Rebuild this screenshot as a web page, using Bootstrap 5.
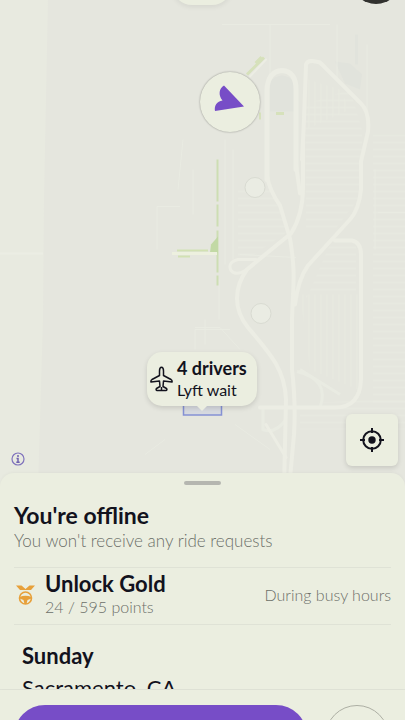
<!DOCTYPE html>
<html lang="en">
<head>
<meta charset="utf-8">
<meta name="viewport" content="width=device-width, initial-scale=1">
<title>Driver map</title>
<link rel="stylesheet" href="https://cdn.jsdelivr.net/npm/bootstrap@5.3.0/dist/css/bootstrap.min.css">
<style>
  :root { --surface: #ebeee0; --ink: #12121d; --muted: #6c6f69; --line: #dfe2d6; --brand: #774dc7; }
  body { font-family: Lato, "Open Sans", sans-serif; color: var(--ink); background: var(--surface); }
  .map-area { background: #e5e6de; margin-bottom: -16px; min-height: 0; }
  .map-art { inset: 0; }
  .map-pin { padding: 0; border: 0; background: var(--surface); color: var(--ink); }
  .pin-position { left: 200px; top: 72px; width: 60px; height: 60px; box-shadow: 0 0 2px #0006; }
  .top-pill { left: 172px; top: -35px; width: 60px; height: 40px; box-shadow: 0 2px 5px #0001; }
  .top-dark { right: 4px; top: -46px; width: 50px; height: 50px; background: #32322f; }
  .airport { left: 147px; top: 352px; width: 110px; height: 54px; border-radius: 15px; padding-left: 3px; gap: 4px; box-shadow: 0 2px 5px #0002; }
  .airport::after { content: ""; position: absolute; left: 50px; top: 100%; border: 5px solid transparent; border-top-color: var(--surface); border-bottom: 0; }
  .locate { right: 7px; bottom: 23px; width: 52px; height: 52px; border-radius: 6px; box-shadow: 0 2px 5px #0002; }
  .info { left: 11px; bottom: 23px; width: 14px; height: 14px; background: none; }
  .sheet { height: 216px; border-radius: 14px 14px 0 0; background: var(--surface); box-shadow: 0 -1px 3px #00000008; }
  .handle { width: 37px; height: 4px; background: #b5b6b0; margin-top: 8px; }
  .status { margin: 16px 14px 0; padding-bottom: 14px; border-bottom: 1px solid var(--line); }
  .title { font-size: 23px; line-height: 28px; font-weight: 700; margin: 0; }
  .item-title { font-size: 22px; line-height: 24px; font-weight: 700; margin: 0; }
  .sub { font-size: 17px; line-height: 24px; font-weight: 300; color: var(--muted); margin: 0; }
  .note { font-size: 16px; line-height: 22px; font-weight: 300; color: var(--muted); margin: 0; }
  .pin-title { font-size: 18px; line-height: 21px; font-weight: 700; }
  .pin-text { font-size: 16px; line-height: 22px; }
  .reward { margin: 0 14px; height: 57px; gap: 9px; padding-bottom: 2px; border-bottom: 1px solid var(--line); color: inherit; }
  .day { padding: 19px 22px 0; }
  .place { font-size: 22px; line-height: 24px; margin: 8px 0 0; }
  .actions { height: 31px; padding: 15px 16px 0 14px; gap: 18px; border-top: 1px solid var(--line); background: var(--surface); }
  .go { height: 62px; border-radius: 31px; border: 0; background: var(--brand); }
  .round { width: 64px; height: 64px; border: 1px solid #adafa4; background: none; }
</style>
<script src="https://cdn.jsdelivr.net/npm/bootstrap@5.3.0/dist/js/bootstrap.bundle.min.js"></script>
</head>
<body>
<div class="d-flex flex-column vh-100 overflow-hidden">
  <main class="map-area position-relative flex-grow-1 overflow-hidden">
    <svg class="map-art position-absolute w-100 h-100" viewBox="0 0 405 490" preserveAspectRatio="xMidYMid slice" aria-hidden="true">
      <defs>
        <pattern id="streets" width="24" height="7" patternUnits="userSpaceOnUse"><path d="M0 3H24" stroke="#e9ebe1"/></pattern>
        <pattern id="avenues" width="6" height="30" patternUnits="userSpaceOnUse"><path d="M3 0V30" stroke="#e8eae0"/></pattern>
      </defs>
      <path d="M0 0H48L44 200L43 320L38 490H0Z" fill="#e8eae0"/>
      <path d="M0 254H43" stroke="#ebede4" stroke-width="2"/>
      <path d="M270 82Q282 70 294 82V112H270ZM335 62L350 64L362 75L360 90L345 84ZM355 35H358V65H355Z" fill="#e1e3dc"/>
      <g fill="url(#streets)">
        <path d="M238 190H272L288 232L250 258H238ZM305 105L350 90L362 130V195L335 230H306ZM373 135H405V405H373ZM306 300L330 245H356V292H306Z"/>
        <path d="M380 400H405V430H300V404Z"/>
      </g>
      <path d="M300 295H358V390L310 370ZM308 80L340 90L350 110L306 130Z" fill="url(#avenues)"/>
      <g fill="none" stroke="#e9ebe2">
        <path d="M225 140V265M233 150V260M219 280V320M157 250V207H180M183 140L178 190M193 170V215M222 25H330M270 25V75M337 25V80M367 45V130M375 170V250M378 213H405M195 350V330H230M195 328H220L240 350M235 425L270 450M165 440L145 455M205 320V345M296 258L240 255"/>
        <path d="M297 372Q330 380 320 408M300 370L340 395M263 408V430Q275 435 286 420" stroke-width="3"/>
      </g>
      <g fill="none" stroke="#ecede4" stroke-linecap="round" stroke-linejoin="round">
        <path d="M267 180V90Q268 72 282 71Q296 72 296 90V170" stroke-width="5"/>
        <path d="M303 140V188Q303 215 291 234Q265 255 247 270C234 288 233 309 248 328C270 354 285 370 286 400L284 490" stroke-width="4"/>
        <path d="M267 176Q269 190 280 206L290 239C296 275 293 285 292 320V370Q296 405 294 435L289 490" stroke-width="4"/>
        <path d="M300 194L296 165M302 160L304 120L306 65Q308 59 320 63L360 103Q370 112 368 132L361 162V190Q359 210 350 220L308 266Q298 280 295 305" stroke-width="4"/>
        <path d="M335 241H352Q361 243 361 255V380Q360 408 335 408H260" stroke-width="4"/>
        <path d="M256 260H238Q227 263 231 271Q236 277 247 270M266 425L286 458" stroke-width="3"/>
        <path d="M266 60L250 77" stroke-width="2"/>
      </g>
      <g fill="none" stroke="#d6e1bb">
        <path d="M264 58L247 75" stroke-width="3"/><path d="M262 58L256 64" stroke-width="4"/><path d="M276 114H284" stroke-width="3"/><path d="M260 113V120" stroke-width="2"/>
        <path d="M217.500 160V286" stroke="#cddeb3" stroke-width="2" stroke-dasharray="42 3 22 4"/>
        <path d="M177 251H208M178 257H190" stroke="#d2e1b3" stroke-width="2"/>
      </g>
      <path d="M218 237V253H210L211 245Z" fill="#c2d9a5"/>
      <path d="M172 254H217" stroke="#edf0df" stroke-width="3"/>
      <g fill="#eaece3" stroke="#d9dbd2" stroke-width="1"><circle cx="255" cy="188" r="10"/><circle cx="261" cy="314" r="10"/></g>
      <rect x="183.500" y="400" width="38" height="15.500" fill="#d6d9df" stroke="#8591d4" stroke-width="1.500"/>
    </svg>
    <button class="map-pin top-pill position-absolute rounded-pill" aria-label="Earnings"></button>
    <button class="map-pin top-dark position-absolute rounded-circle" aria-label="Profile"></button>
    <div class="map-pin pin-position position-absolute rounded-circle" role="img" aria-label="Your position">
      <svg class="d-block w-100 h-100" viewBox="0 0 60 60"><path d="M24 13.500L44 34.500L15 39C14 34 17 29 22.500 28.500C18 23 19 16.500 24 13.500Z" fill="#774dc7"/></svg>
    </div>
    <button class="map-pin airport position-absolute d-flex align-items-center text-start">
      <svg width="23" height="26" viewBox="0 0 23 26" fill="none" stroke="#12121d" stroke-width="1.500" stroke-linejoin="round" aria-hidden="true"><path d="M11.500 1.200C10 1.200 9.500 3 9.500 5V9.500L2 13.500Q.6 14.500 1 16L9.500 15L10 20.500L6.500 22.500Q5.500 24 7 24.500H16Q17.500 24 16.500 22.500L13 20.500L13.500 15L22 16Q22.400 14.500 21 13.500L13.500 9.500V5C13.500 3 13 1.200 11.500 1.200ZM11.500 21V24.500"/></svg>
      <span class="d-flex flex-column text-nowrap"><span class="pin-title">4 drivers</span><span class="pin-text">Lyft wait</span></span>
    </button>
    <button class="map-pin info position-absolute" aria-label="Map information"><svg class="d-block" width="14" height="14" viewBox="0 0 14 14" aria-hidden="true"><circle cx="7" cy="7" r="6" fill="none" stroke="#7f72bc" stroke-width="1.200"/><path d="M7 3V5M5.500 6.500H7V10M5.300 10.200H8.700" fill="none" stroke="#6f62b0" stroke-width="1.500"/></svg></button>
    <button class="map-pin locate position-absolute d-flex align-items-center justify-content-center" aria-label="Center on my location"><svg width="26" height="26" viewBox="0 0 26 26" fill="none" stroke="#12121d" stroke-width="2" aria-hidden="true"><circle cx="13" cy="13" r="8.800"/><circle cx="13" cy="13" r="3.700" fill="#12121d" stroke="none"/><path d="M13 1V6M13 20V25M1 13H6M20 13H25"/></svg></button>
  </main>
  <section class="sheet position-relative flex-shrink-0 overflow-hidden">
    <div class="handle rounded-pill mx-auto"></div>
    <div class="status">
      <h1 class="title">You're offline</h1>
      <p class="sub">You won't receive any ride requests</p>
    </div>
    <a href="#rewards" class="reward d-flex align-items-center text-decoration-none">
      <svg class="flex-shrink-0" width="22" height="22" viewBox="0 0 22 22" aria-hidden="true"><path d="M2 1.500H7.500L11.500 5L15.500 1.500H21L17 6H6Z" fill="#e7a03a"/><circle cx="11.500" cy="14" r="6" fill="none" stroke="#e7a03a" stroke-width="1.600"/><path d="M5.500 13Q11.500 10.500 17.500 13V14.500L13.500 16L12.500 20H10.500L9.500 16L5.500 14.500Z" fill="#e7a03a"/></svg>
      <span class="flex-grow-1"><span class="item-title d-block">Unlock Gold</span><span class="note d-block">24 / 595 points</span></span>
      <span class="note text-nowrap">During busy hours</span>
    </a>
    <div class="day">
      <h2 class="item-title">Sunday</h2>
      <p class="place">Sacramento, CA</p>
    </div>
  </section>
  <footer class="actions d-flex align-items-start flex-shrink-0 overflow-hidden">
    <button class="go flex-grow-1" aria-label="Go online"></button>
    <button class="round rounded-circle flex-shrink-0" aria-label="Filters"></button>
  </footer>
</div>
</body>
</html>
